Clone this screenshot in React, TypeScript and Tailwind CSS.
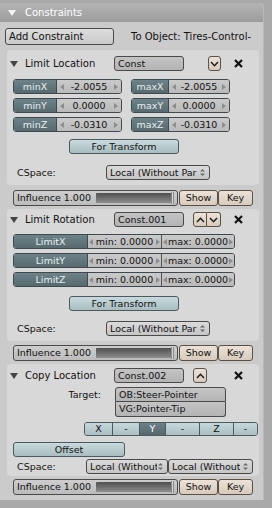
import React from "react";

const font = "font-['DejaVu_Sans',sans-serif] text-[9.5px] leading-none";

function Tri({ color = "#404040" }: { color?: string }) {
  return (
    <svg width="8" height="6" viewBox="0 0 8 6">
      <path d="M0 0 L8 0 L4 6 Z" fill={color} />
    </svg>
  );
}

function Chevron({ up = false }: { up?: boolean }) {
  return (
    <svg width="9" height="6" viewBox="0 0 9 6">
      <polyline
        points={up ? "1,5 4.5,1.2 8,5" : "1,1 4.5,4.8 8,1"}
        fill="none"
        stroke="#1a1a1a"
        strokeWidth="1.4"
      />
    </svg>
  );
}

function XIcon() {
  return (
    <svg width="9" height="9" viewBox="0 0 9 9">
      <path d="M1 1 L8 8 M8 1 L1 8" stroke="#111" strokeWidth="2.2" />
    </svg>
  );
}

function UpDown() {
  return (
    <svg width="7" height="9" viewBox="0 0 7 9">
      <path d="M1 3.6 L3.5 1 L6 3.6 Z M1 5.4 L3.5 8 L6 5.4 Z" fill="#6a6a6a" />
    </svg>
  );
}

function ArrowL() {
  return (
    <svg width="4" height="6" viewBox="0 0 4 6" className="shrink-0">
      <path d="M4 0 L0 3 L4 6 Z" fill="#8c8c8c" />
    </svg>
  );
}
function ArrowR() {
  return (
    <svg width="4" height="6" viewBox="0 0 4 6" className="shrink-0">
      <path d="M0 0 L4 3 L0 6 Z" fill="#8c8c8c" />
    </svg>
  );
}

function BeigeBtn({ w, children, cls = "" }: { w: string; children: React.ReactNode; cls?: string }) {
  return (
    <div
      className={`${w} ${cls} h-full rounded-[3px] border border-[#5a5046] bg-linear-to-b from-[#ece2d8] to-[#d8cbbd] flex items-center justify-center text-[#111]`}
    >
      {children}
    </div>
  );
}

function NameField({ text }: { text: string }) {
  return (
    <div className="w-[70px] h-full rounded-[3px] border border-[#4a4a4a] bg-linear-to-b from-[#c4c4c4] to-[#b4b4b4] flex items-center pl-[3px] text-[#111] overflow-hidden whitespace-nowrap">
      {text}
    </div>
  );
}

function BoxHeader({ title, name, buttons }: { title: string; name: string; buttons: React.ReactNode }) {
  return (
    <div className="flex items-center h-[15px]">
      <div className="w-[18px] pl-[3px] flex items-center">
        <Tri color="#454545" />
      </div>
      <div className="w-[89px] text-[#111] text-[10px]">{title}</div>
      <NameField text={name} />
      {buttons}
      <div className="ml-[13px] flex items-center">
        <XIcon />
      </div>
    </div>
  );
}

function LabelNum({ label, value, lw, fw }: { label: string; value: string; lw: string; fw: string }) {
  return (
    <div className="flex h-[15px] rounded-[3px] border border-[#3e4a4e] overflow-hidden">
      <div className={`${lw} h-full bg-linear-to-b from-[#6e8389] to-[#566a70] text-[#e6eef0] flex items-center justify-center border-r border-[#3e4a4e]`}>
        {label}
      </div>
      <div className={`${fw} h-full bg-linear-to-b from-[#cacaca] to-[#bababa] text-[#111] flex items-center justify-between px-[3px]`}>
        <ArrowL />
        <span>{value}</span>
        <ArrowR />
      </div>
    </div>
  );
}

function LimitRow({ label }: { label: string }) {
  return (
    <div className="flex h-[15px] ml-[6px] rounded-[3px] border border-[#3e4a4e] overflow-hidden w-[222px]">
      <div className="w-[74px] h-full bg-linear-to-b from-[#6e8389] to-[#566a70] text-[#e6eef0] flex items-center justify-center border-r border-[#3e4a4e]">
        {label}
      </div>
      <div className="w-[74px] h-full bg-linear-to-b from-[#cacaca] to-[#bababa] text-[#111] flex items-center justify-between px-[1px] border-r border-[#555] whitespace-nowrap">
        <ArrowL />
        <span>min: 0.0000</span>
        <ArrowR />
      </div>
      <div className="flex-1 h-full bg-linear-to-b from-[#cacaca] to-[#bababa] text-[#111] flex items-center justify-between px-[1px] whitespace-nowrap">
        <ArrowL />
        <span>max: 0.0000</span>
        <ArrowR />
      </div>
    </div>
  );
}

function TealBtn({ w, ml, children }: { w: string; ml: string; children: React.ReactNode }) {
  return (
    <div
      className={`${w} ${ml} h-[15px] rounded-[3px] border border-[#4a5a5e] bg-linear-to-b from-[#c8dadd] to-[#a9bdc1] text-[#111] flex items-center justify-center`}
    >
      {children}
    </div>
  );
}

function Dropdown({ w, text }: { w: string; text: string }) {
  return (
    <div
      className={`${w} h-full rounded-[3px] border border-[#4a4a4a] bg-linear-to-b from-[#dadada] to-[#c6c6c6] text-[#111] flex items-center justify-between pl-[3px] pr-[3px] overflow-hidden whitespace-nowrap`}
    >
      <span className="overflow-hidden">{text}</span>
      <UpDown />
    </div>
  );
}

function CSpace({ textW, children, mt }: { textW: string; children: React.ReactNode; mt: string }) {
  return (
    <div className={`flex items-center h-[15px] ${mt}`}>
      <div className={`${textW} pl-[10px] text-[#111]`}>CSpace:</div>
      {children}
    </div>
  );
}

function Influence({ mt }: { mt: string }) {
  return (
    <div className={`flex h-[16px] ${mt} ml-[13px]`}>
      <div className="w-[165px] h-full rounded-[3px] border border-[#4a4a4a] bg-linear-to-b from-[#cecece] to-[#bcbcbc] flex items-center overflow-hidden">
        <div className="w-[82px] pl-[3px] text-[#111] whitespace-nowrap">Influence 1.000</div>
        <div className="w-[75px] h-[10px] bg-linear-to-b from-[#505050] to-[#8e8e8e] rounded-l-[1px]" />
        <div className="w-[3px] h-[12px] bg-[#d8d8d8] border-x border-[#888]" />
      </div>
      <BeigeBtn w="w-[39px]" cls="ml-[1px]">Show</BeigeBtn>
      <BeigeBtn w="w-[35px]">Key</BeigeBtn>
    </div>
  );
}

export default function App() {
  return (
    <div className={`w-[272px] h-[508px] bg-[#a9a9a9] overflow-hidden ${font}`}>
      <div className="w-[264px] h-[497px] mt-[3px] bg-[#cbcbcb] flex flex-col rounded-tl-[4px] rounded-tr-[4px] border-r border-[#b8b8b8]">
        {/* Header */}
        <div className="h-[19px] flex items-center bg-linear-to-b from-[#b4b4b4] to-[#9c9c9c] rounded-tl-[4px] rounded-tr-[4px]">
          <div className="ml-[8px] flex items-center">
            <Tri color="#f4f4f4" />
          </div>
          <span className="ml-[9px] text-white text-[10px]">Constraints</span>
        </div>

        {/* Add constraint */}
        <div className="flex items-center h-[17px] mt-[6px]">
          <div className="ml-[5px] w-[109px] h-full rounded-[3px] border border-[#4a4a4a] bg-linear-to-b from-[#dedede] to-[#cacaca] flex items-center pl-[3px] text-[#111] text-[10px]">
            Add Constraint
          </div>
          <div className="ml-[17px] text-[#111] text-[10px] whitespace-nowrap">To Object: Tires-Control-</div>
        </div>

        {/* Box 1 */}
        <div className="ml-[7px] mt-[5px] w-[252px] h-[135px] bg-[#d8d8d8] rounded-[4px] flex flex-col pt-[6px]">
          <BoxHeader
            title="Limit Location"
            name="Const"
            buttons={
              <BeigeBtn w="w-[13px]" cls="ml-[24px]">
                <Chevron />
              </BeigeBtn>
            }
          />
          <div className="flex flex-col gap-[4px] mt-[8px] ml-[6px]">
            {[
              ["minX", "-2.0055", "maxX", "-2.0055"],
              ["minY", "0.0000", "maxY", "0.0000"],
              ["minZ", "-0.0310", "maxZ", "-0.0310"],
            ].map((r) => (
              <div key={r[0]} className="flex gap-[9px]">
                <LabelNum label={r[0]} value={r[1]} lw="w-[43px]" fw="w-[64px]" />
                <LabelNum label={r[2]} value={r[3]} lw="w-[37px]" fw="w-[60px]" />
              </div>
            ))}
          </div>
          <div className="mt-[7px] flex">
            <TealBtn w="w-[110px]" ml="ml-[62px]">For Transform</TealBtn>
          </div>
          <CSpace textW="w-[99px]" mt="mt-[11px]">
            <Dropdown w="w-[104px]" text="Local (Without Par" />
          </CSpace>
        </div>

        <Influence mt="mt-[5px]" />

        {/* Box 2 */}
        <div className="ml-[7px] mt-[3px] w-[252px] h-[132px] bg-[#d8d8d8] rounded-[4px] flex flex-col pt-[3px]">
          <BoxHeader
            title="Limit Rotation"
            name="Const.001"
            buttons={
              <div className="flex h-full ml-[9px]">
                <BeigeBtn w="w-[14px]" cls="rounded-r-none">
                  <Chevron up />
                </BeigeBtn>
                <BeigeBtn w="w-[14px]" cls="rounded-l-none border-l-0">
                  <Chevron />
                </BeigeBtn>
              </div>
            }
          />
          <div className="flex flex-col gap-[4px] mt-[7px]">
            <LimitRow label="LimitX" />
            <LimitRow label="LimitY" />
            <LimitRow label="LimitZ" />
          </div>
          <div className="mt-[9px] flex">
            <TealBtn w="w-[110px]" ml="ml-[62px]">For Transform</TealBtn>
          </div>
          <CSpace textW="w-[99px]" mt="mt-[10px]">
            <Dropdown w="w-[104px]" text="Local (Without Par" />
          </CSpace>
        </div>

        <Influence mt="mt-[4px]" />

        {/* Box 3 */}
        <div className="ml-[7px] mt-[3px] w-[252px] h-[112px] bg-[#d8d8d8] rounded-[4px] flex flex-col pt-[4px]">
          <BoxHeader
            title="Copy Location"
            name="Const.002"
            buttons={
              <div className="flex h-full ml-[9px] mr-[14px]">
                <BeigeBtn w="w-[14px]">
                  <Chevron up />
                </BeigeBtn>
              </div>
            }
          />
          <div className="flex mt-[4px]">
            <div className="w-[95px] flex flex-col items-end pr-[1px]">
              <div className="h-[15px] flex items-center text-[#111]">Target:</div>
            </div>
            <div className="ml-[13px] w-[111px] flex flex-col">
              <div className="h-[15px] rounded-t-[3px] border border-[#4a4a4a] bg-linear-to-b from-[#c4c4c4] to-[#b4b4b4] flex items-center pl-[3px] text-[#111]">
                OB:Steer-Pointer
              </div>
              <div className="h-[15px] rounded-b-[3px] border border-t-0 border-[#4a4a4a] bg-linear-to-b from-[#c4c4c4] to-[#b4b4b4] flex items-center pl-[3px] text-[#111]">
                VG:Pointer-Tip
              </div>
            </div>
          </div>
          <div className="flex h-[14px] mt-[5px] ml-[77px] rounded-[3px] border border-[#4a5a5e] overflow-hidden w-[174px]">
            {[
              ["X", "w-[27px]", false],
              ["-", "w-[27px]", false],
              ["Y", "w-[26px]", true],
              ["-", "w-[34px]", false],
              ["Z", "w-[34px]", false],
              ["-", "flex-1", false],
            ].map(([t, w, sel], i) => (
              <div
                key={i}
                className={`${w} h-full flex items-center justify-center ${i > 0 ? "border-l border-[#4a5a5e]" : ""} ${
                  sel
                    ? "bg-linear-to-b from-[#6b8187] to-[#56696f] text-white"
                    : "bg-linear-to-b from-[#c6d8db] to-[#abbfc3] text-[#111]"
                }`}
              >
                {t as string}
              </div>
            ))}
          </div>
          <div className="mt-[6px] flex">
            <TealBtn w="w-[112px]" ml="ml-[6px]">Offset</TealBtn>
          </div>
          <CSpace textW="w-[79px]" mt="mt-[2px]">
            <Dropdown w="w-[82px]" text="Local (Without" />
            <Dropdown w="w-[85px]" text="Local (Without" />
          </CSpace>
        </div>

        <Influence mt="mt-[3px]" />
      </div>
    </div>
  );
}
